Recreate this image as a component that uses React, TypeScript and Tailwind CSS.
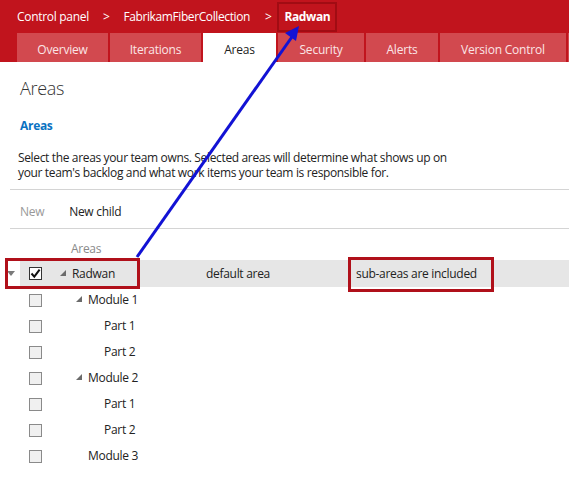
import React from "react";

const TABS = [
  { label: "Overview", w: 91 },
  { label: "Iterations", w: 91 },
  { label: "Areas", w: 73, on: true },
  { label: "Security", w: 86 },
  { label: "Alerts", w: 72 },
  { label: "Version Control", w: 126 },
  { label: "", w: 40 },
];

// pad = left padding of the name cell (cell starts right after the checkbox)
const ROWS: { label: string; pad: number; caret?: boolean; on?: boolean; note?: string; sub?: string }[] = [
  { label: "Radwan", pad: 18, caret: true, on: true, note: "default area", sub: "sub-areas are included" },
  { label: "Module 1", pad: 34, caret: true },
  { label: "Part 1", pad: 62 },
  { label: "Part 2", pad: 62 },
  { label: "Module 2", pad: 34, caret: true },
  { label: "Part 1", pad: 62 },
  { label: "Part 2", pad: 62 },
  { label: "Module 3", pad: 46 },
];

function Box({ checked }: { checked?: boolean }) {
  return (
    <span
      className={`flex h-[13px] w-[13px] shrink-0 items-center justify-center border ${
        checked ? "border-[#333] bg-white" : "border-[#8a8a8a] bg-[#f0f0f0]"
      }`}
    >
      {checked && (
        <svg width="11" height="11" viewBox="0 0 11 11">
          <path d="M1.5 5.5 L4.3 8.6 L9.6 1.6" fill="none" stroke="#111" strokeWidth="2" />
        </svg>
      )}
    </span>
  );
}

export default function App() {
  return (
    <div className="relative h-[483px] w-[569px] overflow-hidden bg-white text-[12px] text-[#222]" style={{ fontFamily: '"Open Sans", "Noto Sans", sans-serif' }}>
      {/* header */}
      <header className="bg-[#c1141d]">
        <div className="flex h-[33px] items-center pl-[17px] text-[12px] tracking-[-0.3px] text-white">
          <span>Control panel</span>
          <span className="mx-[14px]">&gt;</span>
          <span className="tracking-[-0.4px]">FabrikamFiberCollection</span>
          <span className="ml-[15px]">&gt;</span>
          <span className="ml-[6px] flex h-[30px] items-center border-2 border-[#a10c13] px-[5px] font-bold tracking-[-0.4px]">Radwan</span>
        </div>
        <nav className="flex h-[29px] gap-[2px] pl-[17px]">
          {TABS.map((t, i) => (
            <div
              key={i}
              className={`flex shrink-0 items-center justify-center pt-[4px] text-[12px] tracking-[-0.2px] ${
                t.on ? "bg-white text-[#222]" : "bg-[#d2494f] text-[#fbe5e6]"
              }`}
              style={{ width: t.w }}
            >
              {t.label}
            </div>
          ))}
        </nav>
      </header>

      {/* content */}
      <div className="pl-[20px]">
        <div className="mt-[14px] h-[24px] text-[18px] font-light leading-[24px] tracking-[-0.3px] text-[#333]">Areas</div>
        <div className="mt-[18px] h-[16px] text-[12px] font-bold leading-[16px] tracking-[-0.3px] text-[#0a72c2]">Areas</div>
        <p className="ml-[-2px] mt-[16px] text-[12px] leading-[15px] tracking-[-0.35px] text-[#222]">
          Select the areas your team owns. Selected areas will determine what shows up on
          <br />
          your team's backlog and what work items your team is responsible for.
        </p>
      </div>
      <div className="ml-[10px] mt-[9px] h-px bg-[#d4d4d4]" />
      <div className="flex h-[38px] items-center gap-[25px] pl-[20px] pt-[6px] text-[12px] tracking-[-0.3px]">
        <span className="text-[#999]">New</span>
        <span className="text-[#222]">New child</span>
      </div>
      <div className="ml-[10px] h-px bg-[#d4d4d4]" />
      <div className="flex h-[31px] items-center pl-[71px] pt-[9px] text-[12px] tracking-[-0.3px] text-[#8a8a8a]">Areas</div>

      {/* tree */}
      <div className="flex flex-col text-[12px] tracking-[-0.3px]">
        {ROWS.map((r, i) => (
          <div key={i} className={`flex items-center ${i === 0 ? "h-[27px]" : "h-[26px]"}`}>
            <div className="flex w-[20px] justify-center pl-[2px]">
              {r.on && (
                <svg width="8" height="5" viewBox="0 0 8 5">
                  <path d="M0 0 L8 0 L4 5 Z" fill="#7a7a7a" />
                </svg>
              )}
            </div>
            <div className={`flex h-full flex-1 items-center pl-[9px] ${r.on ? "bg-[#e6e6e6]" : ""}`}>
              <Box checked={r.on} />
              <div className="flex w-[164px] items-center gap-[6px]" style={{ paddingLeft: r.pad }}>
                {r.caret && (
                  <svg width="6" height="6" viewBox="0 0 6 6" className="mb-[2px]">
                    <path d="M6 0 L6 6 L0 6 Z" fill="#6b6b6b" />
                  </svg>
                )}
                <span>{r.label}</span>
              </div>
              {r.note && <span className="w-[150px]">{r.note}</span>}
              {r.sub && <span>{r.sub}</span>}
            </div>
          </div>
        ))}
      </div>

      {/* annotations */}
      <div className="absolute left-[5px] top-[258px] h-[31px] w-[135px] border-[3px] border-[#b0101a]" />
      <div className="absolute left-[348px] top-[257px] h-[35px] w-[146px] border-[3px] border-[#b0101a]" />
      <svg className="pointer-events-none absolute left-0 top-0" width="569" height="483">
        <line x1="137" y1="257" x2="294" y2="34" stroke="#1212d4" strokeWidth="3" />
        <path d="M299 26 L285 33 L296 41 Z" fill="#1212d4" />
      </svg>
    </div>
  );
}
